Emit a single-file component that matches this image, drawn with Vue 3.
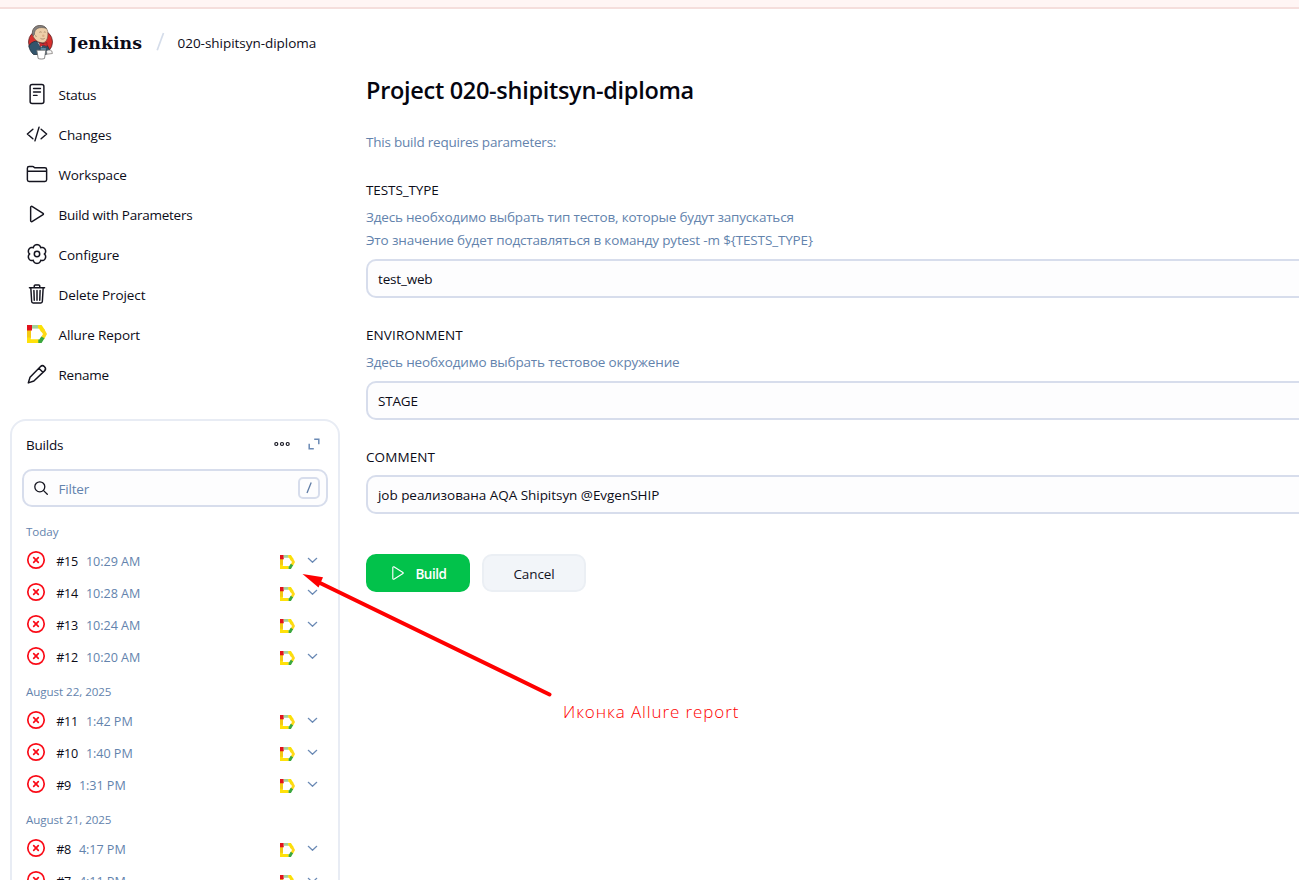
<script setup>
const nav = [
  { label: 'Status', icon: 'status', spacing: -0.25 },
  { label: 'Changes', icon: 'changes', spacing: -0.12 },
  { label: 'Workspace', icon: 'workspace', spacing: -0.13 },
  { label: 'Build with Parameters', icon: 'play', spacing: -0.25 },
  { label: 'Configure', icon: 'configure', spacing: -0.08 },
  { label: 'Delete Project', icon: 'trash', spacing: -0.1 },
  { label: 'Allure Report', icon: 'allure', spacing: -0.1 },
  { label: 'Rename', icon: 'rename', spacing: -0.25 },
]
const groups = [
  {
    day: 'Today',
    builds: [
      { id: 15, time: '10:29 AM' },
      { id: 14, time: '10:28 AM' },
      { id: 13, time: '10:24 AM' },
      { id: 12, time: '10:20 AM' },
    ],
  },
  {
    day: 'August 22, 2025',
    builds: [
      { id: 11, time: '1:42 PM' },
      { id: 10, time: '1:40 PM' },
      { id: 9, time: '1:31 PM' },
    ],
  },
  {
    day: 'August 21, 2025',
    builds: [
      { id: 8, time: '4:17 PM' },
      { id: 7, time: '4:11 PM' },
    ],
  },
]

// Six-lobed gear outline around (11, 11)
const gear =
  'M' +
  Array.from({ length: 120 }, (_, i) => {
    const a = (i / 120) * Math.PI * 2
    const r = 7.3 + 2.1 * Math.pow(Math.abs(Math.cos(3 * a)), 0.75)
    return `${(11 + r * Math.sin(a)).toFixed(2)} ${(11 - r * Math.cos(a)).toFixed(2)}`
  }).join('L') +
  'Z'
</script>

<template>
  <div class="page">
    <svg class="defs" width="0" height="0" aria-hidden="true">
      <symbol id="allure" viewBox="0 0 20 18" preserveAspectRatio="none">
        <path d="M0 5h4v8H0z" fill="#f3c915" />
        <path d="M0 0h5v5.500H0z" fill="#e2121b" />
        <path d="M5 0h6.500v3.600H5z" fill="#a3d09b" />
        <path d="M11 0h3.600l3.200 4.800-3.600 2.300L12 3.600h-1z" fill="#fbe106" />
        <path d="M17.400 4.300L20 9l-2.800 5.200-3.200-1.800L16 9l-2.200-3z" fill="#ffd917" />
        <path d="M17.500 13.200L14.600 18H11v-3.600h1.300l2-3z" fill="#3ba83e" />
        <path d="M11.300 14.200V18H0v-5.500h3.800v1.700z" fill="#ffe10a" />
      </symbol>
    </svg>

    <div class="alert-strip"></div>

    <header class="header">
      <svg class="logo" width="27" height="35" viewBox="0 0 27 35">
        <ellipse cx="13.500" cy="17" rx="12" ry="12" fill="#d8302c" stroke="#5a2a2c" stroke-width=".8" />
        <path d="M1.800 21c1.500-2.800 4-4.200 6.700-4.800l7.500 2.300 4.500 2.300 2.500 5.200-4 3.500H6.500c-2.500-2.300-4-5-4.700-8.500z" fill="#33556c" stroke="#20303c" stroke-width=".8" />
        <path d="M10.500 17l4.500 3.500-.5 3z" fill="#f7f5f2" />
        <path d="M5.600 9C5 4.200 8 .8 12.500.6c5-.2 8.200 2.800 8.400 7.400.1 4-.7 7.500-3.200 9.200-3 1.200-7.200.2-9.900-3.200C6.600 12.500 5.800 11 5.600 9z" fill="#eecfa9" stroke="#6a564a" stroke-width=".6" />
        <path d="M5.300 9.500C4.800 4.200 8 .7 12.500.5c3.200-.1 5.500.9 6.900 2.900-3.200-1-6.400-1.100-8.600-.1C8.600 4.300 7.400 6 7.300 9.800l-1 .9z" fill="#858180" stroke="#454241" stroke-width=".5" />
        <path d="M12.300 7.400c.8-.7 1.700-.7 2.300-.1M16.800 7.300c.7-.5 1.400-.4 1.900.1M8.500 10.300l.8 1.600M13.500 13.400c1.500.9 3 .8 4.200 0" fill="none" stroke="#9a7a5e" stroke-width=".8" />
        <circle cx="16.300" cy="10.700" r="1.200" fill="#d9ae86" />
        <path d="M12.500 17.500l3.500 1.200 4-1.200v4l-3.700-1.300-3.300 1.600z" fill="#d22d30" stroke="#6e1f24" stroke-width=".5" />
        <path d="M13 23c2-1 5-.8 7 .3l-1.500 2.700-5 .2z" fill="#5d8aa3" stroke="#20303c" stroke-width=".6" />
        <path d="M9.800 25.200h9l-1.300 8.300c-2 .7-4.300.7-6.300 0z" fill="#fff" stroke="#6b6b6b" stroke-width=".8" />
        <path d="M19.500 26.300c1-1.700 4-1.700 5.300-.3l.6 2.500-5.500.7z" fill="#f5f5f5" stroke="#77716f" stroke-width=".7" />
      </svg>
      <span class="brand">Jenkins</span>
      <svg class="slash" width="9" height="20" viewBox="0 0 9 20"><path d="M7.500 1L1.200 18.300" fill="none" stroke="#d5ddea" stroke-width="1.700" /></svg>
      <span class="crumb">020-shipitsyn-diploma</span>
    </header>

    <div class="body">
      <aside class="side">
        <nav class="nav">
          <a v-for="n in nav" :key="n.label" class="nav-item">
            <svg v-if="n.icon === 'allure'" class="allure-lg" width="20" height="18"><use href="#allure" /></svg>
            <svg v-else-if="n.icon === 'rename'" class="ico" viewBox="0 0 24 24">
              <path stroke-width="1.600" d="M2.500 21.700l1.900-6.100L15.600 4a3.100 3.100 0 0 1 4.600 4.600L8.600 19.700zM14 5.800l4.400 4.400" />
            </svg>
            <svg v-else-if="n.icon === 'configure'" class="ico" viewBox="0 0 22 22">
              <path stroke-width="1.500" :d="gear" />
              <circle stroke-width="1.500" cx="11" cy="11" r="2.700" />
            </svg>
            <svg v-else class="ico" viewBox="0 0 512 512">
              <template v-if="n.icon === 'status'">
                <rect x="96" y="36" width="320" height="440" rx="48" />
                <path d="M176 128h160M176 208h160M176 288h80" />
              </template>
              <path v-else-if="n.icon === 'changes'" d="M160 368L32 256l128-112M352 368l128-112-128-112M304 96l-96 320" />
              <path v-else-if="n.icon === 'workspace'" d="M440 432H72a40 40 0 01-40-40V120a40 40 0 0140-40h75.890a40 40 0 0122.190 6.720l27.840 18.560a40 40 0 0022.190 6.720H440a40 40 0 0140 40v240a40 40 0 01-40 40zM32 192h448" />
              <path v-else-if="n.icon === 'play'" d="M108 101v310c0 17.440 17 28.520 31 20.160l257.900-158.370c12.120-7.250 12.120-26.330 0-33.580L139 80.840c-14-8.360-31 2.720-31 20.160z" />
              <path v-else d="M112 112l20 320c.950 18.490 14.400 32 32 32h184c17.670 0 30.870-13.510 32-32l20-320M80 112h352M192 112V72a23.930 23.930 0 0124-24h80a23.930 23.930 0 0124 24v40M256 176v224M184 176l8 224M328 176l-8 224" />
            </svg>
            <span :style="{ letterSpacing: n.spacing + 'px' }">{{ n.label }}</span>
          </a>
        </nav>

        <section class="card">
          <div class="card-head">
            <span class="card-title">Builds</span>
            <svg width="16" height="6" viewBox="0 0 16 6" fill="none" stroke="#14141f" stroke-width="1.200">
              <circle cx="2.300" cy="3" r="1.500" /><circle cx="8" cy="3" r="1.500" /><circle cx="13.700" cy="3" r="1.500" />
            </svg>
            <svg class="expand" width="12" height="12" viewBox="0 0 12 12" fill="none" stroke="#6b8ab5" stroke-width="1.500">
              <path d="M6.200 1.200h4.600v5M1.200 5.800v5h4.600" />
            </svg>
          </div>
          <div class="filter">
            <svg width="16" height="16" viewBox="0 0 16 16" fill="none" stroke="#14141f" stroke-width="1.300" stroke-linecap="round">
              <circle cx="6.800" cy="6.800" r="5" /><path d="M10.600 10.600l3.700 3.700" />
            </svg>
            <span class="placeholder">Filter</span>
            <kbd class="key"><svg width="8" height="14" viewBox="0 0 8 14"><path d="M6.200 1.500L2 12" stroke="#5f7ca6" stroke-width="1.300" /></svg></kbd>
          </div>
          <div v-for="g in groups" :key="g.day">
            <div class="day">{{ g.day }}</div>
            <div v-for="b in g.builds" :key="b.id" class="build">
              <svg class="fail" width="20" height="20" viewBox="0 0 20 20" fill="none" stroke="#fa0c18" stroke-width="1.700" stroke-linecap="round">
                <circle cx="10" cy="10" r="8.200" /><path d="M7.700 7.700l4.600 4.600M12.300 7.700l-4.600 4.600" />
              </svg>
              <span class="num">#{{ b.id }}</span>
              <span class="time">{{ b.time }}</span>
              <svg class="allure-sm" width="15" height="14"><use href="#allure" /></svg>
              <svg class="chev" width="11" height="7" viewBox="0 0 11 7" fill="none" stroke="#6b8ab5" stroke-width="1.200" stroke-linecap="round" stroke-linejoin="round"><path d="M1.300 1.300l4.200 4 4.200-4" /></svg>
            </div>
          </div>
        </section>
      </aside>

      <main class="main">
        <h1>Project 020-shipitsyn-diploma</h1>
        <p class="intro muted">This build requires parameters:</p>

        <div class="field">
          <div class="label types">TESTS_TYPE</div>
          <div class="desc muted">
            <div class="line-a">Здесь необходимо выбрать тип тестов, которые будут запускаться</div>
            <div class="line-b">Это значение будет подставляться в команду pytest -m ${TESTS_TYPE}</div>
          </div>
          <div class="control tight">test_web</div>
        </div>
        <div class="field">
          <div class="label env">ENVIRONMENT</div>
          <div class="desc muted"><div class="line-c">Здесь необходимо выбрать тестовое окружение</div></div>
          <div class="control tight">STAGE</div>
        </div>
        <div class="field">
          <div class="label env comment">COMMENT</div>
          <div class="control">job реализована AQA Shipitsyn @EvgenSHIP</div>
        </div>

        <div class="actions">
          <button class="btn primary">
            <svg width="18" height="18" viewBox="0 0 512 512" fill="none" stroke="#fff" stroke-width="32"><path d="M108 101v310c0 17.440 17 28.520 31 20.160l257.900-158.370c12.120-7.250 12.120-26.330 0-33.580L139 80.840c-14-8.360-31 2.720-31 20.160z" /></svg>
            <span>Build</span>
          </button>
          <button class="btn">Cancel</button>
        </div>
      </main>
    </div>

    <svg class="arrow" width="260" height="130" viewBox="0 0 260 130">
      <path d="M18 11L249.500 123.500" stroke="#fe0000" stroke-width="4" stroke-linecap="round" />
      <path d="M2.500 3L23 6.300l-4.500 10.200z" fill="#fe0000" />
    </svg>
    <div class="note">Иконка Allure report</div>
  </div>
</template>

<style>
body {
  background: #fff;
}
</style>

<style scoped>
.page {
  position: relative;
  height: 880px;
  overflow: hidden;
  background: #fff;
  color: #0c0c18;
  font: 13.5px/20px "Open Sans", "Noto Sans", sans-serif;
}
.defs {
  position: absolute;
}
.alert-strip {
  box-sizing: border-box;
  height: 9px;
  background: #fff5f4;
  border-bottom: 2px solid #f5dedc;
}
.header {
  display: flex;
  align-items: center;
  height: 66px;
  padding-left: 27px;
}
.logo {
  flex: none;
}
.brand {
  width: 73px;
  padding: 1px 0 0 15px;
  font: bold 17.4px/24px "DejaVu Serif", serif;
}
.slash {
  margin: 0 12.5px 0 14px;
}
.crumb {
  padding-top: 2px;
  letter-spacing: -0.03px;
}
.body {
  display: flex;
}
.side {
  width: 340px;
  flex: none;
}
.nav {
  padding-bottom: 24px;
}
.nav-item {
  display: flex;
  align-items: center;
  height: 40px;
  padding-left: 26px;
}
.ico {
  width: 22px;
  height: 22px;
  margin: 0 10.5px 2px 0;
  fill: none;
  stroke: #14141f;
  stroke-width: 34;
  stroke-linecap: round;
  stroke-linejoin: round;
}
.allure-lg {
  margin: 0 11.5px 2px 1px;
}
.card {
  box-sizing: border-box;
  width: 330px;
  height: 600px;
  margin-left: 10px;
  border: 2px solid #e8ecf4;
  border-radius: 16px;
  padding: 0 10px;
}
.card-head {
  display: flex;
  align-items: center;
  box-sizing: border-box;
  height: 48px;
  padding: 0 8px 2px 4px;
}
.card-title {
  flex: 1;
  padding-top: 1px;
  letter-spacing: -0.2px;
}
.expand {
  margin-left: 18px;
}
.filter {
  display: flex;
  align-items: center;
  box-sizing: border-box;
  height: 38px;
  margin-bottom: 6px;
  padding: 0 6px 0 9px;
  background: #fdfdfe;
  border: 2px solid #d7ddec;
  border-radius: 10px;
}
.placeholder {
  flex: 1;
  padding: 1px 0 0 9.5px;
  letter-spacing: -0.2px;
  color: #6383ad;
}
.key {
  display: grid;
  place-items: center;
  box-sizing: border-box;
  width: 22px;
  height: 22px;
  border: 2px solid #d7ddec;
  border-radius: 5px;
}
.day {
  height: 27px;
  padding: 5px 0 0 4px;
  font-size: 11.6px;
  line-height: 27px;
  letter-spacing: -0.06px;
  color: #6383ad;
}
.build {
  display: flex;
  align-items: center;
  height: 32px;
  padding-left: 4px;
  font-size: 12.6px;
}
.fail {
  margin-bottom: 2px;
}
.num {
  padding: 1px 0 0 10.2px;
  letter-spacing: -0.2px;
}
.time {
  flex: 1;
  padding: 1px 0 0 7.8px;
  letter-spacing: -0.05px;
  color: #6383ad;
}
.allure-sm {
  margin-top: 2px;
}
.chev {
  margin: 0 10px 2px 12px;
}
.main {
  flex: 1;
  padding-left: 26px;
}
h1 {
  margin: -1px 0 0;
  font-size: 23.5px;
  font-weight: 600;
  line-height: 32px;
  letter-spacing: -0.3px;
  color: #05050f;
}
.muted {
  color: #6383ad;
}
.intro {
  margin: 26px 0 28px;
  letter-spacing: -0.22px;
}
.field {
  margin-bottom: 27px;
}
.label {
  margin-bottom: 6px;
}
.types {
  letter-spacing: -0.1px;
}
.env {
  letter-spacing: 0.1px;
}
.comment {
  margin-bottom: 8px;
}
.desc {
  margin-bottom: 7px;
  line-height: 23px;
  white-space: nowrap;
}
.line-a {
  letter-spacing: -0.19px;
}
.line-b {
  letter-spacing: -0.15px;
}
.line-c {
  letter-spacing: -0.16px;
}
.control {
  box-sizing: border-box;
  height: 39px;
  padding: 1px 10px 0;
  line-height: 35px;
  letter-spacing: -0.04px;
  background: #fdfdfe;
  border: 2px solid #d7ddec;
  border-right: 0;
  border-radius: 10px 0 0 10px;
}
.tight {
  letter-spacing: -0.18px;
}
.actions {
  display: flex;
  gap: 12px;
  padding-top: 13px;
}
.btn {
  display: flex;
  align-items: center;
  justify-content: center;
  box-sizing: border-box;
  width: 104px;
  height: 38px;
  padding: 2px 0 0;
  border: 2px solid #ebeff4;
  border-radius: 10px;
  background: #f2f5f9;
  color: #14141f;
  font: inherit;
  letter-spacing: -0.1px;
}
.primary {
  gap: 8px;
  border-color: #02c24b;
  background: #02c24b;
  color: #fff;
  font-weight: 600;
  letter-spacing: -0.45px;
}
.primary svg {
  margin-bottom: 2px;
}
.arrow {
  position: absolute;
  left: 300px;
  top: 571px;
}
.note {
  position: absolute;
  left: 563px;
  top: 699px;
  font-size: 17px;
  font-weight: 350;
  line-height: 25px;
  letter-spacing: 0.9px;
  color: #fe0000;
  white-space: nowrap;
}
</style>
